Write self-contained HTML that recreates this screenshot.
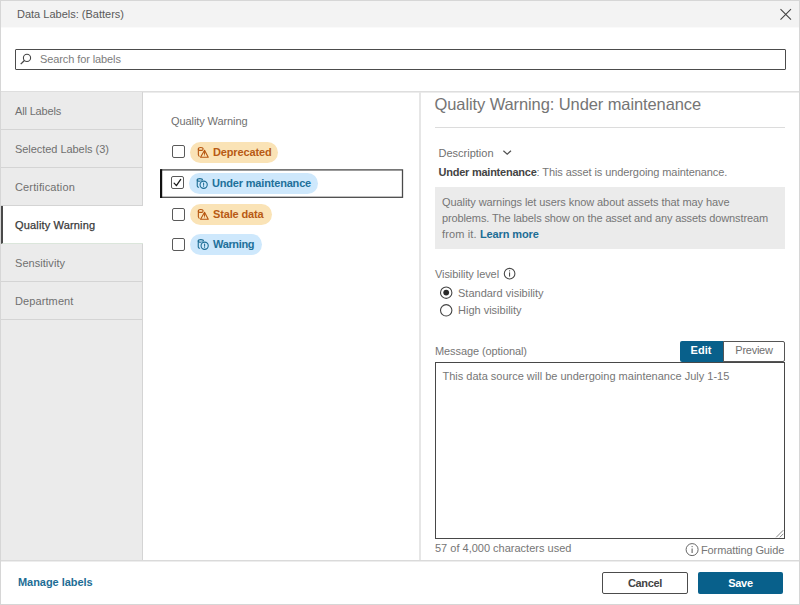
<!DOCTYPE html>
<html lang="en">
<head>
<meta charset="utf-8">
<title>Data Labels</title>
<style>
*{box-sizing:border-box;margin:0;padding:0}
html,body{width:800px;height:605px;overflow:hidden;background:#fff}
body{font-family:"Liberation Sans",sans-serif;font-size:11px;color:#767676;position:relative}
.abs{position:absolute}
.t{position:absolute;white-space:nowrap;line-height:14px}
b{font-weight:bold}
#frame{left:0;top:0;width:800px;height:605px;border:1px solid #d6d6d6;z-index:50;pointer-events:none}
#hdr{left:1px;top:1px;width:798px;height:26px;background:#f3f3f3}
#search{left:15px;top:49px;width:771px;height:21px;border:1px solid #4c4c4c;border-radius:1px;background:#fff}
#div1{left:1px;top:91px;width:798px;height:2px;background:linear-gradient(#dedede 50%,#ececec 50%)}
#side{left:1px;top:92px;width:142px;height:468px;background:#ebebeb;border-right:1px solid #d4d4d4}
.tab{position:absolute;left:1px;width:141px;height:38px;border-bottom:1px solid #d4d4d4;color:#707070}
.tab span{position:absolute;left:14px;top:12px;line-height:14px;white-space:nowrap}
.tab.on{background:#fff;width:142px;border-left:2px solid #4a4a4a;color:#3a3a3a;border-bottom:1px solid #dbe6db;-webkit-text-stroke:0.25px #3a3a3a}
.tab.on span{left:12px}
#vdiv{left:419px;top:92px;width:2px;height:468px;background:#e6e6e6}
#fdiv{left:1px;top:560px;width:798px;height:2px;background:linear-gradient(#dadada 50%,#ededed 50%)}
.cb{position:absolute;width:13px;height:13px;border:1px solid #5a5a5a;background:#fff;border-radius:2px}
.pill{position:absolute;height:21px;border-radius:11px;font-weight:bold;font-size:11px;line-height:21px;white-space:nowrap}
.pill.o{background:#fae3b6;color:#b85a14}
.pill.b{background:#cee8fc;color:#21709a}
.pill span{position:absolute;left:23px;top:0}
.pill svg{position:absolute;left:7px;top:4px;overflow:visible}
</style>
</head>
<body>
<div class="abs" id="hdr"></div>
<div class="abs" style="left:1px;top:27px;width:798px;height:1px;background:#fafafa"></div>
<div class="t" style="left:17px;top:7px;color:#5a5a5a">Data Labels: (Batters)</div>
<svg class="abs" style="left:779px;top:8px" width="14" height="14" viewBox="0 0 14 14"><path d="M1.5 1.1 L12 11.6 M12 1.1 L1.5 11.6" stroke="#444" stroke-width="1.1" fill="none"/></svg>

<div class="abs" id="search"></div>
<svg class="abs" style="left:20px;top:53px" width="12" height="12" viewBox="0 0 12 12"><circle cx="7" cy="4.9" r="3.6" stroke="#444" stroke-width="1.1" fill="none"/><path d="M4.4 7.5 L0.7 11.1" stroke="#444" stroke-width="1.3" fill="none"/></svg>
<div class="t" style="left:40px;top:52px;color:#7c7c7c;letter-spacing:-0.1px">Search for labels</div>

<div class="abs" id="div1"></div>
<div class="abs" id="side"></div>
<div class="tab" style="top:92px"><span style="letter-spacing:-0.16px">All Labels</span></div>
<div class="tab" style="top:130px"><span style="letter-spacing:-0.05px">Selected Labels (3)</span></div>
<div class="tab" style="top:168px"><span style="letter-spacing:0.14px">Certification</span></div>
<div class="tab on" style="top:206px"><span style="letter-spacing:0.16px">Quality Warning</span></div>
<div class="tab" style="top:244px"><span style="letter-spacing:0.05px">Sensitivity</span></div>
<div class="tab" style="top:282px"><span style="letter-spacing:0.1px">Department</span></div>

<div class="t" style="left:171px;top:114px;color:#707070;letter-spacing:-0.09px">Quality Warning</div>

<div class="cb" style="left:172px;top:145px"></div>
<div class="pill o" style="left:190px;top:142px;width:88px"><svg width="12" height="12" viewBox="0 0 12 12" fill="none" stroke="#b6550f" stroke-width="1.1" stroke-linecap="round" stroke-linejoin="round"><path d="M1.35 2.9 V8.8 Q1.5 10.3 3.2 10.8"/><ellipse cx="3.75" cy="2.9" rx="2.4" ry="1.45"/><path d="M7.55 4.3 L11.25 11.2 H3.55 Z" fill="#fae3b6" stroke="#fae3b6" stroke-width="2.4"/><path d="M7.55 4.3 L11.25 11.2 H3.55 Z"/><path d="M7.5 6.5 V8.3" stroke-width="1"/><circle cx="7.5" cy="9.6" r="0.45" fill="#b6550f" stroke="none"/></svg><span style="letter-spacing:-0.14px">Deprecated</span></div>

<svg class="abs" style="left:158px;top:167px" width="248" height="34" viewBox="0 0 248 34"><rect x="3" y="2.9" width="241.5" height="27.4" fill="#fff" stroke="#4a4a4a" stroke-width="1.3"/><rect x="2" y="2.2" width="2.2" height="28.8" fill="#111"/></svg>
<div class="cb" style="left:171px;top:176px"></div>
<svg class="abs" style="left:171px;top:176px" width="13" height="13" viewBox="0 0 13 13"><path d="M3.1 7.2 L5.4 9.7 L9.7 3.4" stroke="#1a1a1a" stroke-width="1.25" fill="none" stroke-linecap="round" stroke-linejoin="round"/></svg>
<div class="pill b" style="left:189px;top:173px;width:129px"><svg width="12" height="12" viewBox="0 0 12 12" fill="none" stroke="#1d6d95" stroke-width="1.1" stroke-linecap="round" stroke-linejoin="round"><path d="M1.25 2.9 V9 Q1.3 10 2.6 10.3"/><ellipse cx="3.85" cy="2.9" rx="2.6" ry="1.3"/><circle cx="7.65" cy="7.75" r="4.5" fill="#cee8fc" stroke="none"/><circle cx="7.65" cy="7.75" r="3.6"/><path d="M7.6 6 V8.3" stroke-width="1.05"/><circle cx="7.6" cy="9.45" r="0.5" fill="#1d6d95" stroke="none"/></svg><span style="letter-spacing:-0.18px">Under maintenance</span></div>

<div class="cb" style="left:172px;top:208px"></div>
<div class="pill o" style="left:190px;top:204px;width:82px"><svg width="12" height="12" viewBox="0 0 12 12" fill="none" stroke="#b6550f" stroke-width="1.1" stroke-linecap="round" stroke-linejoin="round"><path d="M1.35 2.9 V8.8 Q1.5 10.3 3.2 10.8"/><ellipse cx="3.75" cy="2.9" rx="2.4" ry="1.45"/><path d="M7.55 4.3 L11.25 11.2 H3.55 Z" fill="#fae3b6" stroke="#fae3b6" stroke-width="2.4"/><path d="M7.55 4.3 L11.25 11.2 H3.55 Z"/><path d="M7.5 6.5 V8.3" stroke-width="1"/><circle cx="7.5" cy="9.6" r="0.45" fill="#b6550f" stroke="none"/></svg><span style="letter-spacing:-0.14px">Stale data</span></div>

<div class="cb" style="left:172px;top:238px"></div>
<div class="pill b" style="left:190px;top:234px;width:72px"><svg width="12" height="12" viewBox="0 0 12 12" fill="none" stroke="#1d6d95" stroke-width="1.1" stroke-linecap="round" stroke-linejoin="round"><path d="M1.25 2.9 V9 Q1.3 10 2.6 10.3"/><ellipse cx="3.85" cy="2.9" rx="2.6" ry="1.3"/><circle cx="7.65" cy="7.75" r="4.5" fill="#cee8fc" stroke="none"/><circle cx="7.65" cy="7.75" r="3.6"/><path d="M7.6 6 V8.3" stroke-width="1.05"/><circle cx="7.6" cy="9.45" r="0.5" fill="#1d6d95" stroke="none"/></svg><span style="letter-spacing:-0.34px">Warning</span></div>

<div class="abs" id="vdiv"></div>

<!-- right panel -->
<div class="t" id="h1" style="left:434.5px;top:93px;font-size:16.5px;line-height:22px;color:#757575;letter-spacing:-0.1px">Quality Warning: Under maintenance</div>
<div class="abs" style="left:435px;top:127px;width:350px;height:1px;background:#dcdcdc"></div>
<div class="t" style="left:438.5px;top:146px;color:#707070">Description</div>
<svg class="abs" style="left:500px;top:147px" width="14" height="10" viewBox="0 0 14 10"><path d="M3.4 3.7 L7.2 7.1 L11 3.7" stroke="#505050" stroke-width="1.2" fill="none"/></svg>
<div class="t" style="left:438.5px;top:165px;letter-spacing:-0.09px"><b style="color:#444;letter-spacing:-0.24px">Under maintenance</b>: This asset is undergoing maintenance.</div>

<div class="abs" style="left:435px;top:187px;width:350px;height:62px;background:#ebebeb"></div>
<div class="t" style="left:442px;top:195px;letter-spacing:-0.083px">Quality warnings let users know about assets that may have</div>
<div class="t" style="left:442px;top:211px;letter-spacing:-0.12px">problems. The labels show on the asset and any assets downstream</div>
<div class="t" style="left:442px;top:227px;letter-spacing:0.14px">from it. <b style="color:#1d6d95;letter-spacing:-0.11px">Learn more</b></div>

<div class="t" style="left:435px;top:267px;letter-spacing:-0.075px">Visibility level</div>
<svg class="abs" style="left:503px;top:267px" width="14" height="14" viewBox="0 0 14 14"><circle cx="6.6" cy="6.7" r="5.3" stroke="#4a4a4a" stroke-width="1.1" fill="none"/><path d="M6.6 5.4 V9.6" stroke="#3a3a3a" stroke-width="1"/><circle cx="6.6" cy="3.8" r="0.6" fill="#3a3a3a"/></svg>
<svg class="abs" style="left:439px;top:285px" width="15" height="15" viewBox="0 0 15 15"><circle cx="7.2" cy="7.7" r="5.7" stroke="#444" stroke-width="1.1" fill="#fff"/><circle cx="7.2" cy="7.6" r="2.9" fill="#2a2a2a"/></svg>
<div class="t" style="left:458px;top:286px">Standard visibility</div>
<svg class="abs" style="left:439px;top:303px" width="15" height="15" viewBox="0 0 15 15"><circle cx="7.2" cy="7.3" r="5.7" stroke="#444" stroke-width="1.1" fill="#fff"/></svg>
<div class="t" style="left:458px;top:303px">High visibility</div>

<div class="t" style="left:435px;top:344px;letter-spacing:-0.09px">Message (optional)</div>
<div class="abs" id="edit" style="left:680px;top:341px;width:44px;height:21px;background:#08608b;border-radius:2px 0 0 2px;color:#fff;font-weight:bold;text-align:center;line-height:19px;padding-right:2px">Edit</div>
<div class="abs" id="prev" style="left:723px;top:341px;width:62px;height:21px;background:#fff;border:1px solid #555;border-radius:0 2px 2px 0;color:#707070;text-align:center;line-height:17px;letter-spacing:-0.25px">Preview</div>
<div class="abs" id="ta" style="left:435px;top:362px;width:350px;height:177px;border:1px solid #484848;background:#fff"></div>
<div class="t" style="left:442.5px;top:369px">This data source will be undergoing maintenance July 1-15</div>
<svg class="abs" style="left:773px;top:527px" width="11" height="11" viewBox="0 0 11 11"><path d="M10.3 3.2 L3.2 10.3 M10.3 6.8 L6.8 10.3" stroke="#777" stroke-width="0.9" fill="none"/></svg>
<div class="t" style="left:435px;top:541px">57 of 4,000 characters used</div>
<svg class="abs" style="left:685px;top:543px" width="15" height="15" viewBox="0 0 15 15"><circle cx="7.1" cy="6.6" r="6" stroke="#666" stroke-width="1" fill="none"/><path d="M7.1 5.5 V10" stroke="#555" stroke-width="1"/><circle cx="7.1" cy="3.6" r="0.6" fill="#555"/></svg>
<div class="t" style="left:701px;top:543px;letter-spacing:-0.11px">Formatting Guide</div>

<!-- footer -->
<div class="t" style="left:18px;top:575px;color:#1d6d95;font-weight:bold;letter-spacing:-0.05px">Manage labels</div>
<div class="abs" id="cancel" style="left:602px;top:572px;width:86px;height:22px;border:1px solid #4c4c4c;border-radius:2px;background:#fff;color:#444;font-weight:bold;text-align:center;line-height:20px;letter-spacing:-0.33px">Cancel</div>
<div class="abs" id="save" style="left:698px;top:572px;width:85px;height:22px;border-radius:2px;background:#08608b;color:#fff;font-weight:bold;text-align:center;line-height:22px;letter-spacing:-0.3px">Save</div>
<div class="abs" id="fdiv"></div>
<div class="abs" id="frame"></div>
</body>
</html>
